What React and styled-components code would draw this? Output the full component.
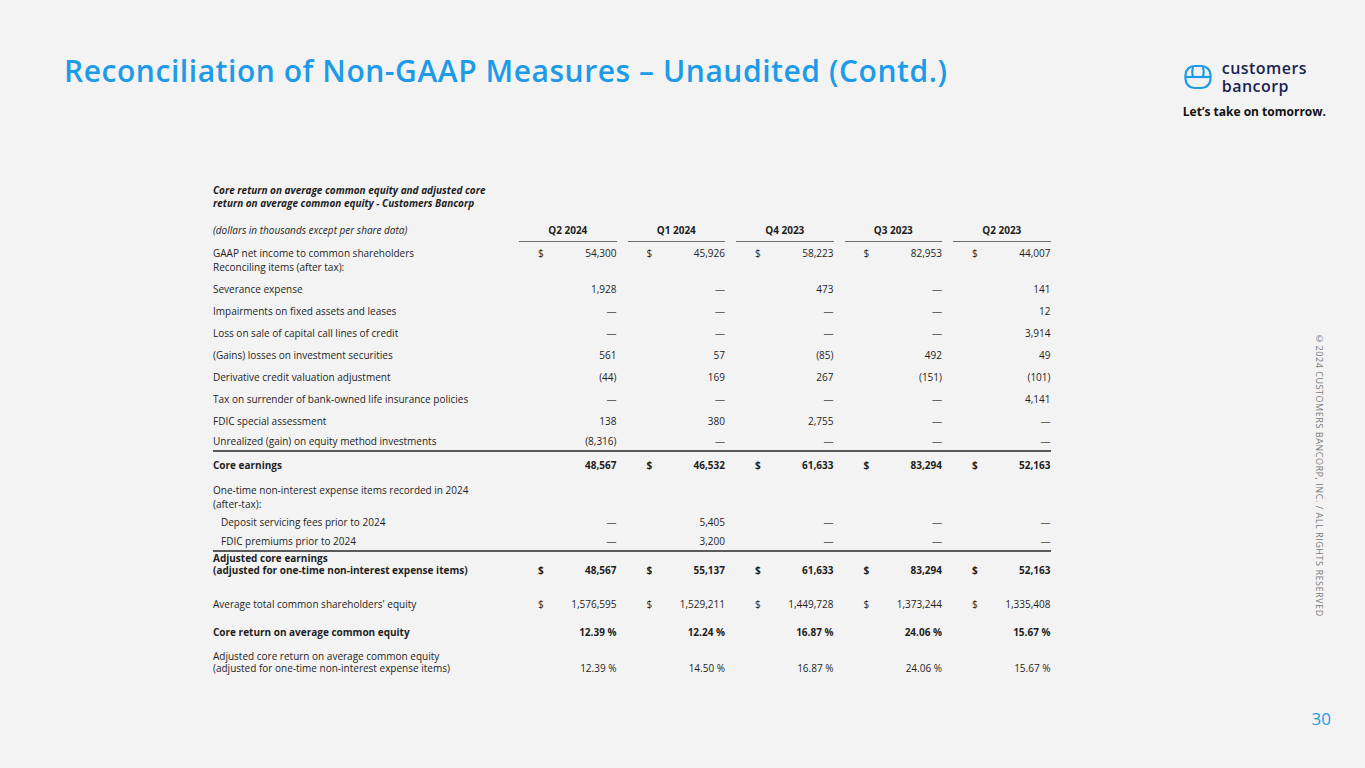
import React from "react";
import styled, { createGlobalStyle } from "styled-components";

const GlobalStyle = createGlobalStyle`
  * { box-sizing: border-box; }
  body {
    margin: 0;
    background: #f3f3f3;
    font-family: "Open Sans", "Liberation Sans", sans-serif;
    color: #1e1e1e;
  }
`;

const Slide = styled.div`
  width: 1365px;
  height: 768px;
  background: #f3f3f3;
  display: flex;
  flex-direction: column;
  overflow: hidden;
`;

const Header = styled.header`
  height: 176px;
  display: flex;
  justify-content: space-between;
  align-items: flex-start;
  padding: 50px 39px 0 64px;
`;

const Title = styled.h1`
  margin: 0;
  font-size: 30px;
  font-weight: 600;
  color: #1d9be8;
  letter-spacing: 0.55px;
`;

const Brand = styled.div`
  display: flex;
  flex-direction: column;
  align-items: flex-start;
  padding-top: 9px;
`;

const LogoRow = styled.div`
  display: flex;
  align-items: center;
  gap: 10px;
  margin-left: 1px;
`;

const BrandName = styled.div`
  font-size: 16px;
  font-weight: 600;
  line-height: 18px;
  color: #1b2452;
  letter-spacing: 0.45px;
`;

const Tagline = styled.div`
  margin-top: 8px;
  font-size: 12px;
  font-weight: 700;
  color: #111;
`;

const Body = styled.div`
  display: flex;
  height: 520px;
`;

const TableWrap = styled.div`
  padding-left: 213px;
  width: 1283px;
  font-size: 10px;
`;

const Caption = styled.div`
  font-weight: 700;
  font-style: italic;
  line-height: 13px;
  margin-top: 8px;
  margin-bottom: 10px;
`;

const Row = styled.div`
  display: grid;
  width: max-content;
  grid-template-columns: 295px repeat(5, 108.5px);
  height: ${(p) => p.$h || 22}px;
  margin-top: ${(p) => p.$mt || 0}px;
  padding-top: ${(p) => p.$pt || 0}px;
  align-items: ${(p) => p.$align || "center"};
  border-bottom: ${(p) => (p.$rule ? "2px solid #5a5a5a" : "none")};
  font-weight: ${(p) => (p.$bold ? 700 : 400)};
  line-height: ${(p) => p.$lh || 14}px;
`;

const Label = styled.div`
  padding-left: ${(p) => (p.$indent ? 8 : 0)}px;
  padding-bottom: ${(p) => (p.$italic ? 5 : 0)}px;
  font-style: ${(p) => (p.$italic ? "italic" : "normal")};
  white-space: nowrap;
`;

const HeadCell = styled.div`
  padding-left: 11px;
`;

const HeadText = styled.div`
  font-weight: 700;
  text-align: center;
  border-bottom: 1.5px solid #6e6e6e;
  padding-bottom: 4px;
  padding-top: 2px;
`;

const Cell = styled.div`
  padding-left: 11px;
  padding-top: ${(p) => p.$pt || 0}px;
  display: flex;
  align-items: center;
  white-space: nowrap;
`;

const Dollar = styled.span`
  margin-left: 19px;
`;

const Value = styled.span`
  margin-left: auto;
  color: ${(p) => (p.$dash ? "#666" : "inherit")};
`;

const Rail = styled.div`
  width: 75px;
  display: flex;
  justify-content: center;
  padding-top: 156px;
`;

const Copyright = styled.div`
  writing-mode: vertical-rl;
  font-size: 9px;
  color: #7a7a7a;
  letter-spacing: 0.55px;
  height: 290px;
  margin-right: 2px;
`;

const Footer = styled.footer`
  flex: 1;
  display: flex;
  justify-content: flex-end;
  align-items: flex-start;
  padding: 11px 34px 0 0;
`;

const PageNum = styled.div`
  font-size: 17px;
  color: #1d9be8;
`;

const Logo = () => (
  <svg width="28" height="26" viewBox="0 0 28 26" fill="none" stroke="#1d9be8" strokeWidth="2.2">
    <rect x="1.5" y="2" width="25" height="22" rx="9" />
    <line x1="2" y1="13" x2="26" y2="13" />
    <path d="M9 3 C 8 6, 8 10, 9 13 M19 3 C 20 6, 20 10, 19 13" />
  </svg>
);

const cols = ["Q2 2024", "Q1 2024", "Q4 2023", "Q3 2023", "Q2 2023"];

const Vals = ({ v, d = [], pt }) =>
  v.map((x, i) => (
    <Cell key={i} $pt={pt}>
      {d[i] ? <Dollar>$</Dollar> : null}
      <Value $dash={x === "—"}>{x}</Value>
    </Cell>
  ));

const D = "—";
const all = [1, 1, 1, 1, 1];

export default function App() {
  return (
    <>
      <GlobalStyle />
      <Slide>
        <Header>
          <Title>Reconciliation of Non-GAAP Measures – Unaudited (Contd.)</Title>
          <Brand>
            <LogoRow>
              <Logo />
              <BrandName>
                <div>customers</div>
                <div>bancorp</div>
              </BrandName>
            </LogoRow>
            <Tagline>Let’s take on tomorrow.</Tagline>
          </Brand>
        </Header>
        <Body>
          <TableWrap>
            <Caption>
              Core return on average common equity and adjusted core
              <br />
              return on average common equity - Customers Bancorp
            </Caption>
            <Row $h={22} $align="end">
              <Label $italic>(dollars in thousands except per share data)</Label>
              {cols.map((c) => (
                <HeadCell key={c}>
                  <HeadText>{c}</HeadText>
                </HeadCell>
              ))}
            </Row>
            <Row $h={36} $align="start" $pt={4}>
              <Label>
                GAAP net income to common shareholders
                <br />
                Reconciling items (after tax):
              </Label>
              <Vals v={["54,300", "45,926", "58,223", "82,953", "44,007"]} d={all} />
            </Row>
            <Row>
              <Label>Severance expense</Label>
              <Vals v={["1,928", D, "473", D, "141"]} />
            </Row>
            <Row>
              <Label>Impairments on fixed assets and leases</Label>
              <Vals v={[D, D, D, D, "12"]} />
            </Row>
            <Row>
              <Label>Loss on sale of capital call lines of credit</Label>
              <Vals v={[D, D, D, D, "3,914"]} />
            </Row>
            <Row>
              <Label>(Gains) losses on investment securities</Label>
              <Vals v={["561", "57", "(85)", "492", "49"]} />
            </Row>
            <Row>
              <Label>Derivative credit valuation adjustment</Label>
              <Vals v={["(44)", "169", "267", "(151)", "(101)"]} />
            </Row>
            <Row>
              <Label>Tax on surrender of bank-owned life insurance policies</Label>
              <Vals v={[D, D, D, D, "4,141"]} />
            </Row>
            <Row>
              <Label>FDIC special assessment</Label>
              <Vals v={["138", "380", "2,755", D, D]} />
            </Row>
            <Row $h={20} $rule>
              <Label>Unrealized (gain) on equity method investments</Label>
              <Vals v={["(8,316)", D, D, D, D]} />
            </Row>
            <Row $h={26} $bold>
              <Label>Core earnings</Label>
              <Vals v={["48,567", "46,532", "61,633", "83,294", "52,163"]} d={[0, 1, 1, 1, 1]} />
            </Row>
            <Row $h={34} $align="start" $pt={5}>
              <Label>
                One-time non-interest expense items recorded in 2024
                <br />
                (after-tax):
              </Label>
            </Row>
            <Row $h={20}>
              <Label $indent>Deposit servicing fees prior to 2024</Label>
              <Vals v={[D, "5,405", D, D, D]} />
            </Row>
            <Row $h={20} $rule>
              <Label $indent>FDIC premiums prior to 2024</Label>
              <Vals v={[D, "3,200", D, D, D]} />
            </Row>
            <Row $h={26} $bold $lh={12} $align="start">
              <Label>
                Adjusted core earnings
                <br />
                (adjusted for one-time non-interest expense items)
              </Label>
              <Vals v={["48,567", "55,137", "61,633", "83,294", "52,163"]} d={all} pt={12} />
            </Row>
            <Row $mt={15}>
              <Label>Average total common shareholders' equity</Label>
              <Vals v={["1,576,595", "1,529,211", "1,449,728", "1,373,244", "1,335,408"]} d={all} />
            </Row>
            <Row $mt={6} $bold>
              <Label>Core return on average common equity</Label>
              <Vals v={["12.39 %", "12.24 %", "16.87 %", "24.06 %", "15.67 %"]} />
            </Row>
            <Row $mt={7} $h={24} $lh={12} $align="end">
              <Label>
                Adjusted core return on average common equity
                <br />
                (adjusted for one-time non-interest expense items)
              </Label>
              <Vals v={["12.39 %", "14.50 %", "16.87 %", "24.06 %", "15.67 %"]} />
            </Row>
          </TableWrap>
          <Rail>
            <Copyright>©2024 CUSTOMERS BANCORP, INC. / ALL RIGHTS RESERVED</Copyright>
          </Rail>
        </Body>
        <Footer>
          <PageNum>30</PageNum>
        </Footer>
      </Slide>
    </>
  );
}
